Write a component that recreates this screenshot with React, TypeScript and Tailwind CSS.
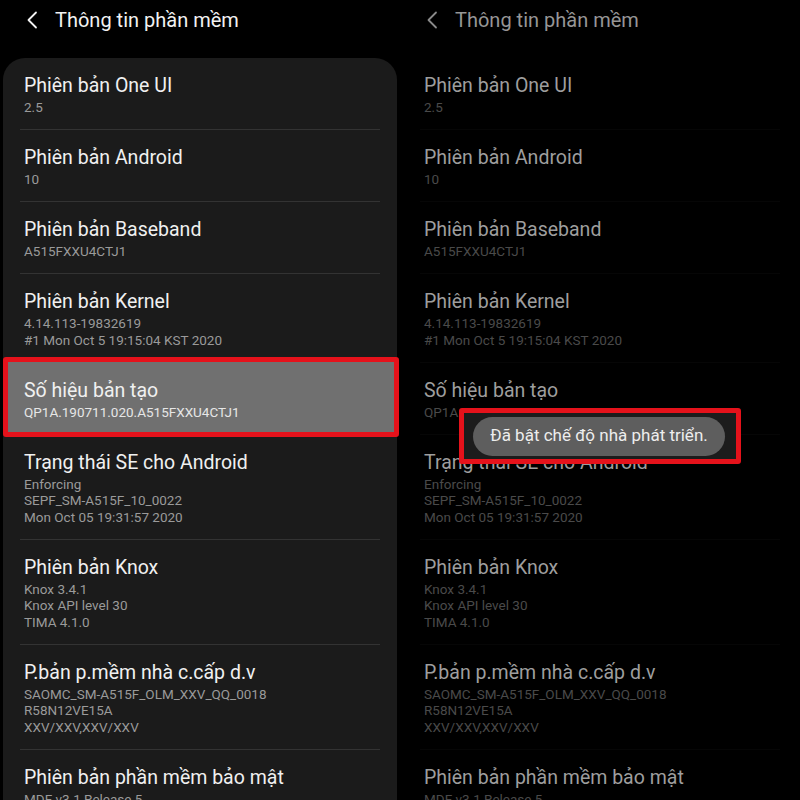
import React from "react";

type Item = { title: string; subs: string[]; highlight?: boolean };

const items: Item[] = [
  { title: "Phiên bản One UI", subs: ["2.5"] },
  { title: "Phiên bản Android", subs: ["10"] },
  { title: "Phiên bản Baseband", subs: ["A515FXXU4CTJ1"] },
  { title: "Phiên bản Kernel", subs: ["4.14.113-19832619", "#1 Mon Oct 5 19:15:04 KST 2020"] },
  { title: "Số hiệu bản tạo", subs: ["QP1A.190711.020.A515FXXU4CTJ1"], highlight: true },
  { title: "Trạng thái SE cho Android", subs: ["Enforcing", "SEPF_SM-A515F_10_0022", "Mon Oct 05 19:31:57 2020"] },
  { title: "Phiên bản Knox", subs: ["Knox 3.4.1", "Knox API level 30", "TIMA 4.1.0"] },
  { title: "P.bản p.mềm nhà c.cấp d.v", subs: ["SAOMC_SM-A515F_OLM_XXV_QQ_0018", "R58N12VE15A", "XXV/XXV,XXV/XXV"] },
  { title: "Phiên bản phần mềm bảo mật", subs: ["MDF v3.1 Release 5"] },
];

function Chevron({ color }: { color: string }) {
  return (
    <svg width="12" height="18" viewBox="0 0 12 18" fill="none">
      <path d="M10 1.5 L2.5 9 L10 16.5" stroke={color} strokeWidth="1.8" strokeLinecap="round" strokeLinejoin="round" />
    </svg>
  );
}

function Panel({ dim }: { dim: boolean }) {
  const font = { fontFamily: 'Roboto, "Noto Sans", sans-serif' };
  return (
    <div className="relative h-[800px] overflow-hidden bg-black" style={font}>
      <div className="flex h-[58px] items-start pt-[10px]">
        <div className="ml-[26px] mt-[1px]">
          <Chevron color={dim ? "#8a8a8a" : "#f2f2f2"} />
        </div>
        <div className={"ml-[17px] text-[20px] leading-[18px] pt-[1px] " + (dim ? "text-[#969696]" : "text-[#f2f2f2]")}>
          Thông tin phần mềm
        </div>
      </div>
      <div className={"mx-[3px] rounded-t-[22px] px-[17px] " + (dim ? "bg-black" : "bg-[#1b1b1b]")}>
        {items.map((it, i) => {
          const hl = it.highlight && !dim;
          return (
            <div
              key={i}
              className={
                (i > 0 ? "border-t " : "") +
                (dim ? "border-[#060606] " : "border-[#333333] ") +
                (hl ? "relative -mx-[17px] px-[21px] bg-[#707070] border-[#707070] " : "pl-[4px] ") +
                "pt-[15px] pb-[13.5px]"
              }
            >
              <div
                className={
                  "text-[19.5px] leading-[26px] " +
                  (dim ? "text-[#9e9e9e]" : "text-[#f0f0f0]")
                }
              >
                {it.title}
              </div>
              {it.subs.map((s, j) => (
                <div
                  key={j}
                  className={
                    "text-[13.5px] leading-[16.5px] " +
                    (dim ? "text-[#4a4a4a]" : hl ? "text-[#e6e6e6]" : "text-[#9a9a9a]")
                  }
                >
                  {s}
                </div>
              ))}
              {hl && (
                <div className="pointer-events-none absolute -top-[6px] -bottom-[3px] left-0 -right-[2px] rounded-[3px] border-[5px] border-[#e5121b]" />
              )}
            </div>
          );
        })}
      </div>
      {dim && (
        <div className="absolute left-[59px] top-[408px] flex h-[56px] w-[282px] items-center rounded-[3px] border-[5px] border-[#e5121b] bg-[#1c1c1c] pl-[9px]">
          <div className="flex h-[39px] w-[252px] items-center justify-center rounded-full bg-[#5e5e5e] text-[17px] text-[#ededed]">
            Đã bật chế độ nhà phát triển.
          </div>
        </div>
      )}
    </div>
  );
}

export default function App() {
  return (
    <div className="grid h-[800px] w-[800px] grid-cols-2 overflow-hidden bg-black">
      <Panel dim={false} />
      <Panel dim={true} />
    </div>
  );
}
